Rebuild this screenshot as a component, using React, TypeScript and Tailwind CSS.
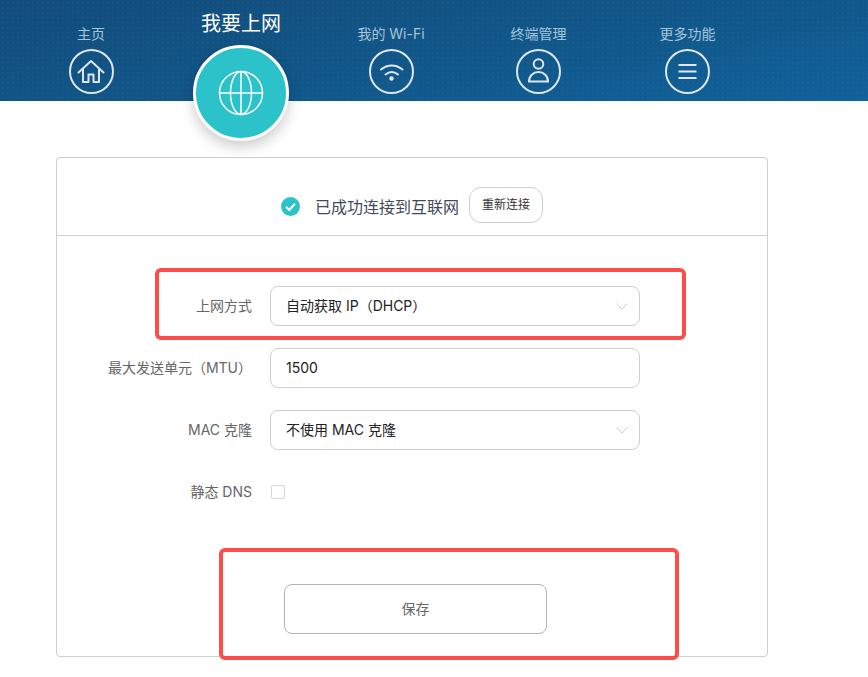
import type { ReactNode } from "react"

const font = "font-['Inter','Noto_Sans_CJK_SC',sans-serif]"

const navItems: { label: string; width: string; icon: ReactNode }[] = [
  {
    label: "主页",
    width: "w-[150px]",
    icon: (
      <svg viewBox="0 0 45 45" className="h-full w-full" fill="none" stroke="currentColor" strokeWidth="2" strokeLinejoin="round" strokeLinecap="round">
        <path d="M9.500 23.500 22 12 34.500 23.500" />
        <path d="M14 20.500v12.500h5.500v-7.500h5v7.500h5.500V20.500" />
      </svg>
    ),
  },
  { label: "我要上网", width: "w-[150px]", icon: null },
  {
    label: "我的 Wi-Fi",
    width: "w-[150px]",
    icon: (
      <svg viewBox="0 0 45 45" className="h-full w-full" fill="none" stroke="currentColor" strokeWidth="2" strokeLinecap="round">
        <path d="M12 20.500c6.500-5.500 15-5.500 21.500 0" />
        <path d="M16.500 25.500c3.800-3 8.700-3 12.500 0" />
        <circle cx="22.500" cy="29.500" r="2.200" fill="currentColor" stroke="none" />
      </svg>
    ),
  },
  {
    label: "终端管理",
    width: "w-[145px]",
    icon: (
      <svg viewBox="0 0 45 45" className="h-full w-full" fill="none" stroke="currentColor" strokeWidth="2">
        <circle cx="22.500" cy="15" r="4.800" />
        <path d="M13 32.500c0-5.500 4.200-9.500 9.500-9.500s9.500 4 9.500 9.500z" />
      </svg>
    ),
  },
  {
    label: "更多功能",
    width: "w-[153px]",
    icon: (
      <svg viewBox="0 0 45 45" className="h-full w-full" fill="none" stroke="currentColor" strokeWidth="2">
        <path d="M13.500 16h18M13.500 22.500h18M13.500 29h18" />
      </svg>
    ),
  },
]

function Chevron() {
  return (
    <svg width="12" height="7" viewBox="0 0 12 7" fill="none" stroke="#c8cfd9" strokeWidth="1">
      <path d="M.5.5 6 6 11.500.5" />
    </svg>
  )
}

function Row({ label, children, mb = "mb-[22px]" }: { label: string; children: ReactNode; mb?: string }) {
  return (
    <div className={`flex h-10 items-center ${mb}`}>
      <div className="w-[213px] pr-[18px] pb-[2px] text-right text-[14px] text-[#666] whitespace-nowrap">{label}</div>
      {children}
    </div>
  )
}

function Field({ text, select }: { text: string; select?: boolean }) {
  return (
    <div className="flex h-10 w-[370px] items-center justify-between rounded-lg border border-[#cfcfcf] pl-[15px] pr-[11px] text-[14px] text-[#222]">
      <span className="pb-[2px]">{text}</span>
      {select && <Chevron />}
    </div>
  )
}

export default function App() {
  return (
    <div className={`relative h-[677px] w-[868px] overflow-hidden bg-white ${font}`}>
      <header className="flex h-[101px] pl-4 bg-[radial-gradient(rgba(255,255,255,0.03)_1px,transparent_1px),linear-gradient(170deg,#124c7c_0%,#115789_55%,#10619c_100%)] bg-[length:5px_5px,100%_100%]">
        {navItems.map((item) =>
          item.icon ? (
            <div key={item.label} className={`${item.width} flex shrink-0 flex-col items-center pt-[25px]`}>
              <div className="h-[18px] text-[14px] leading-[18px] text-[#a5c6d9] whitespace-nowrap">{item.label}</div>
              <div className="mt-[6px] h-[45px] w-[45px] rounded-full border-2 border-[#dde6ee] text-[#dde6ee] [&>svg]:-m-[2px] [&>svg]:h-[45px] [&>svg]:w-[45px]">
                {item.icon}
              </div>
            </div>
          ) : (
            <div key={item.label} className={`${item.width} z-10 flex shrink-0 flex-col items-center pt-[12px]`}>
              <div className="h-6 text-[20px] leading-6 text-white whitespace-nowrap">{item.label}</div>
              <div className="mt-[9px] flex h-[96px] w-[96px] shrink-0 items-center justify-center rounded-full border-[3px] border-white bg-[#2bc3c9] shadow-[0_6px_14px_rgba(0,0,0,0.2)]">
                <svg width="46" height="46" viewBox="0 0 46 46" fill="none" stroke="#fff" strokeWidth="1.500">
                  <circle cx="23" cy="23" r="21.500" />
                  <ellipse cx="23" cy="23" rx="10.500" ry="21.500" />
                  <path d="M23 1.500v43M1.500 23h43" />
                </svg>
              </div>
            </div>
          ),
        )}
      </header>

      <main className="ml-14 mt-14 h-[500px] w-[712px] rounded border border-[#cfcfcf]">
        <div className="flex h-[78px] items-center border-b border-[#cfcfcf] pl-[224px] pt-[20px]">
          <svg width="19" height="19" viewBox="0 0 19 19" className="shrink-0">
            <circle cx="9.500" cy="9.500" r="9.500" fill="#2bc3c9" />
            <path d="M5 9.800 8.300 13 14 6.700" fill="none" stroke="#fff" strokeWidth="2" />
          </svg>
          <span className="ml-[15px] text-[16px] text-[#3f4a5c] whitespace-nowrap">已成功连接到互联网</span>
          <button className="ml-[10px] -mt-[4px] h-9 w-[74px] rounded-xl border border-[#cfcfcf] bg-white text-[12px] text-[#333]">
            重新连接
          </button>
        </div>

        <div className="pt-[50px]">
          <Row label="上网方式">
            <Field text="自动获取 IP（DHCP）" select />
          </Row>
          <Row label="最大发送单元（MTU）">
            <Field text="1500" />
          </Row>
          <Row label="MAC 克隆">
            <Field text="不使用 MAC 克隆" select />
          </Row>
          <Row label="静态 DNS" mb="mb-0">
            <div className="ml-[1px] h-[14px] w-[14px] rounded-[2px] border border-[#d5d9de]" />
          </Row>
        </div>

        <button className="ml-[227px] mt-[72px] block h-[50px] w-[263px] rounded-lg border border-[#b4b4b4] bg-white pb-[2px] text-[14px] text-[#666]">
          保存
        </button>
      </main>

      <div className="absolute left-[155px] top-[268px] h-[72px] w-[531px] rounded-md border-4 border-[#fb4e4b]" />
      <div className="absolute left-[219px] top-[548px] h-[112px] w-[460px] rounded-md border-4 border-[#fb4e4b]" />
    </div>
  )
}
